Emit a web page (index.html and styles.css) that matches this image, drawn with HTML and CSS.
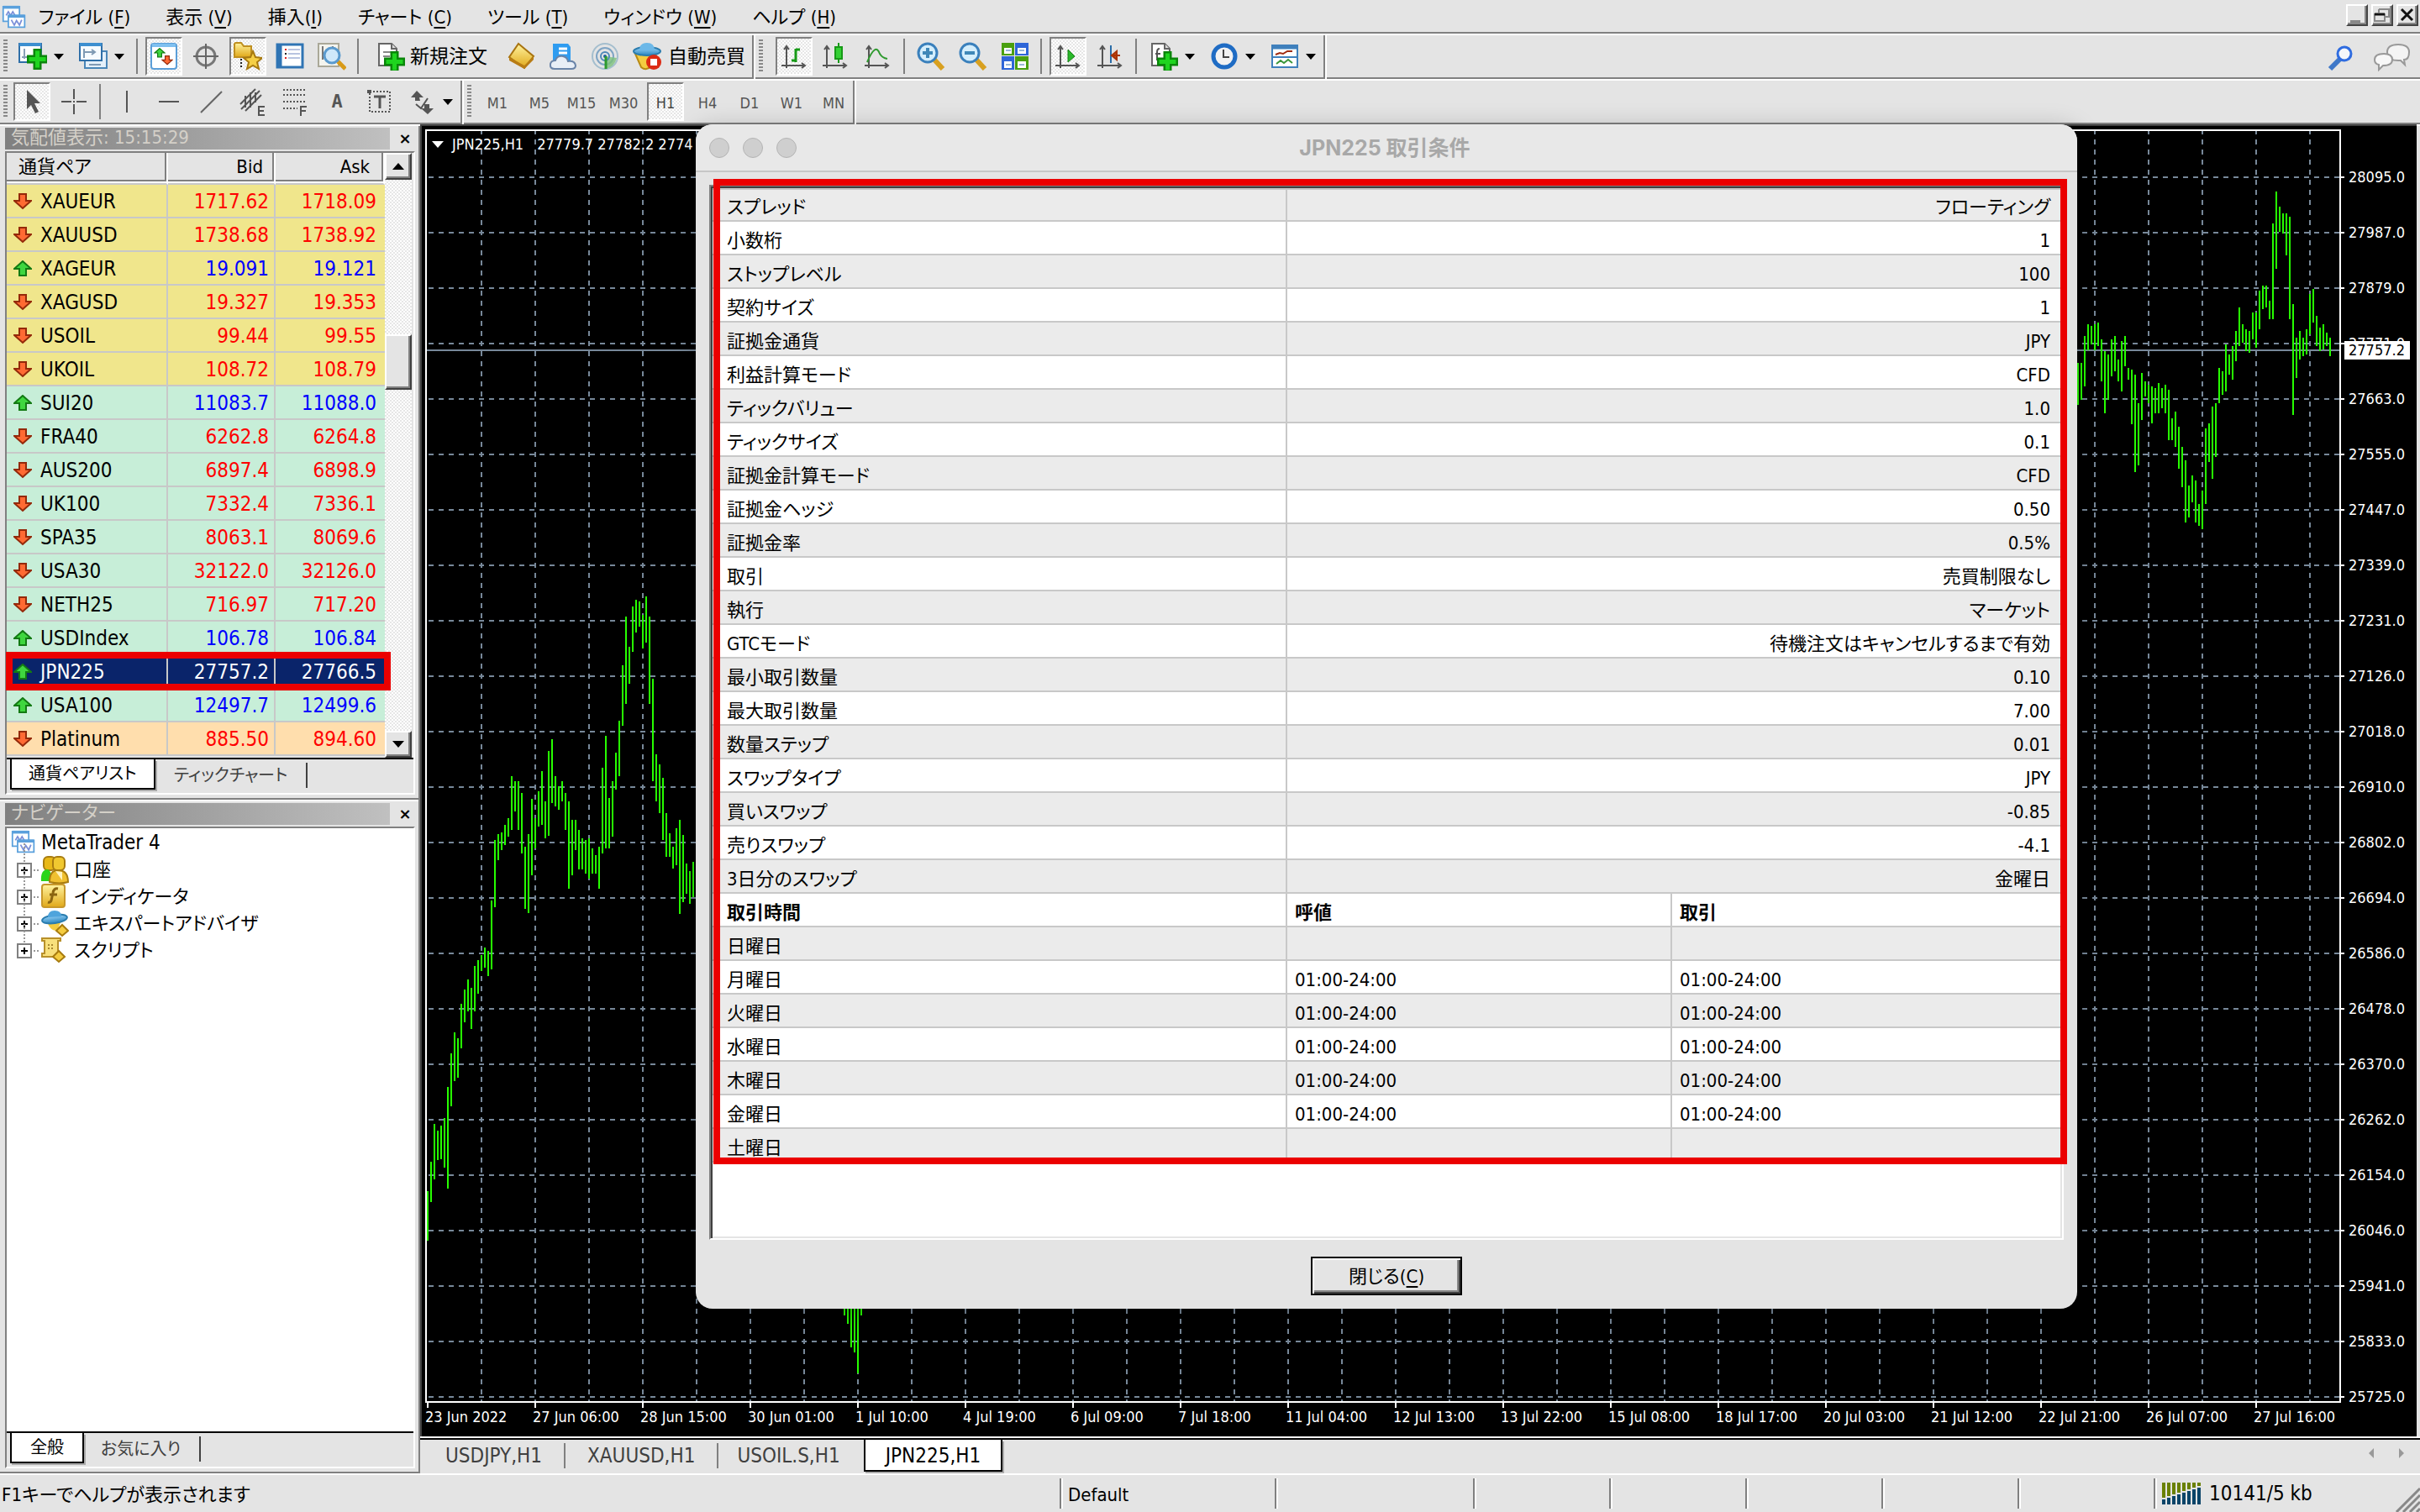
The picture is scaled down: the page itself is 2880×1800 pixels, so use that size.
FILE: index.html
```html
<!DOCTYPE html>
<html lang="ja">
<head>
<meta charset="utf-8">
<title>MetaTrader 4 - JPN225,H1</title>
<link rel="stylesheet" href="styles.css">
</head>
<body>
<svg class="defs" aria-hidden="true">
  <defs>
    <linearGradient id="gold" x1="0" y1="0" x2="0" y2="1"><stop offset="0" stop-color="#fff3a0"/><stop offset="1" stop-color="#e0a818"/></linearGradient>
    <linearGradient id="sky" x1="0" y1="0" x2="0" y2="1"><stop offset="0" stop-color="#9bd4f8"/><stop offset="1" stop-color="#2a86c0"/></linearGradient>
    <symbol id="up" viewBox="0 0 22 20"><path d="M11 1 L21 10 H15 V18 H7 V10 H1 Z" fill="#3fd63f" stroke="#137a13" stroke-width="2"/></symbol>
    <symbol id="down" viewBox="0 0 22 20"><path d="M11 18 L21 9 H15 V1 H7 V9 H1 Z" fill="#ff6a33" stroke="#94290a" stroke-width="2"/></symbol>
    <symbol id="plus" viewBox="0 0 20 20"><path d="M7 1h6v6h6v6h-6v6H7v-6H1V7h6z" fill="#1fd41f" stroke="#0a860a" stroke-width="2"/></symbol>
    <symbol id="charts" viewBox="0 0 34 34"><path d="M2 2h22v20H2z" fill="#fff" stroke="#5aa0dc" stroke-width="2"/><path d="M2 3h22" stroke="#5aa0dc" stroke-width="4"/><path d="M6 14l3-5 3 5 3-5 3 5" fill="none" stroke="#7a8fd8" stroke-width="2"/><path d="M9 14h22v16H9z" fill="#fff" stroke="#5aa0dc" stroke-width="2"/><path d="M9 15h22" stroke="#5aa0dc" stroke-width="4"/><path d="M13 20l4 7 3-6 4 6 3-7" fill="none" stroke="#7a8fd8" stroke-width="2"/></symbol>
    <symbol id="sheet" viewBox="0 0 34 34"><path d="M3 2h15l6 6v20H3z" fill="#fff" stroke="#666" stroke-width="2"/><path d="M18 2v6h6" fill="#ddd" stroke="#666" stroke-width="2"/></symbol>
  </defs>
</svg>

<header class="top">
  <nav class="menubar">
    <svg class="appicon" viewBox="0 0 34 34"><use href="#charts"/></svg>
    <button>ファイル (<u>F</u>)</button><button>表示 (<u>V</u>)</button><button>挿入(<u>I</u>)</button><button>チャート (<u>C</u>)</button><button>ツール (<u>T</u>)</button><button>ウィンドウ (<u>W</u>)</button><button>ヘルプ (<u>H</u>)</button>
    <div class="winbtns">
      <button class="winbtn" aria-label="最小化"><svg viewBox="0 0 22 22"><path d="M3 17h12v3H3z" fill="#888"/></svg></button>
      <button class="winbtn" aria-label="元に戻す"><svg viewBox="0 0 22 22"><path d="M7 4h12v9h-5M7 4v4M2 10h12v8H2z" fill="none" stroke="#888" stroke-width="2"/><path d="M2 10h12" stroke="#111" stroke-width="3"/></svg></button>
      <button class="winbtn" aria-label="閉じる"><svg viewBox="0 0 22 22"><path d="M4 4l13 13M17 4L4 17" stroke="#111" stroke-width="3"/></svg></button>
    </div>
  </nav>

  <div class="bar">
    <div class="group">
      <i class="grip"></i>
      <button class="tool drop" aria-label="新規チャート"><svg class="ic" viewBox="0 0 34 34"><path d="M1 2h26v22H1z" fill="#fff" stroke="#2f6fa8" stroke-width="2"/><path d="M1 3h26" stroke="#3c8fd0" stroke-width="4"/><path d="M7 8v12M4 18h12" stroke="#8aa0b8" stroke-width="2"/><use href="#plus" x="10" y="8" width="25" height="25"/></svg></button>
      <button class="tool drop" aria-label="プロファイル"><svg class="ic" viewBox="0 0 34 34"><path d="M7 11h26v20H7z" fill="#e4f0fa" stroke="#4a86b8" stroke-width="2"/><path d="M1 2h26v20H1z" fill="#f6fbff" stroke="#2f6fa8" stroke-width="2"/><path d="M1 3h26" stroke="#3c8fd0" stroke-width="4"/><path d="M6 8v11M5 12h14M15 9l4 3-4 3M12 27h14" fill="none" stroke="#7f9ab4" stroke-width="2"/></svg></button>
      <i class="sep"></i>
      <button class="tool on" aria-label="気配値表示"><svg class="ic" viewBox="0 0 34 34"><rect x="2" y="2" width="30" height="30" rx="3" fill="#fff" stroke="#5a9ed8" stroke-width="2"/><path d="M3 4h28" stroke="#7fc0f0" stroke-width="4"/><use href="#up" x="5" y="7" width="14" height="12"/><use href="#down" x="14" y="16" width="14" height="12"/></svg></button>
      <button class="tool" aria-label="データウィンドウ"><svg class="ic" viewBox="0 0 34 34"><circle cx="17" cy="17" r="11" fill="none" stroke="#777" stroke-width="3"/><path d="M17 2v30M2 17h30" stroke="#666" stroke-width="2"/></svg></button>
      <button class="tool on" aria-label="ナビゲーター"><svg class="ic" viewBox="0 0 34 34"><path d="M1 7V3q0-2 2-2h6l3 4h9v13H1z" fill="url(#gold)" stroke="#c09020" stroke-width="2"/><path d="M9 20v11" stroke="#222" stroke-width="2" stroke-dasharray="2 2"/><path d="M23 11l3 7 8 1-6 5 2 8-7-4-7 4 2-8-6-5 8-1z" fill="#f5cf45" stroke="#a87a10" stroke-width="2"/></svg></button>
      <button class="tool" aria-label="ターミナル"><svg class="ic" viewBox="0 0 34 34"><path d="M2 3h30v27H2z" fill="#fff" stroke="#2f74b4" stroke-width="3"/><path d="M5 4v25" stroke="#2f74b4" stroke-width="5"/><path d="M15 9h14M15 14h14M15 19h14" stroke="#b8c4e0" stroke-width="2"/><path d="M11 9h2M11 19h2" stroke="#e02020" stroke-width="2"/><path d="M11 14h2" stroke="#222" stroke-width="2"/></svg></button>
      <button class="tool" aria-label="ストラテジーテスター"><svg class="ic" viewBox="0 0 34 34"><path d="M1 2h24v27H1z" fill="#f4f4ee" stroke="#aaa898" stroke-width="2"/><path d="M6 5v16M18 5v6" stroke="#777" stroke-width="2"/><path d="M24 23l9 9" stroke="#d89a18" stroke-width="5"/><circle cx="17" cy="16" r="9" fill="#cfe8fa" stroke="#5a9ace" stroke-width="3"/></svg></button>
      <i class="sep"></i>
      <button class="tool wide"><svg class="ic" viewBox="0 0 34 34"><use href="#sheet" width="34" height="34"/><path d="M8 12h10M8 17h8" stroke="#888" stroke-width="2"/><use href="#plus" x="9" y="11" width="25" height="25"/></svg><span>新規注文</span></button>
      <button class="tool" aria-label="メタエディター"><svg class="ic" viewBox="0 0 34 34"><path d="M14 2L32 17 21 31 3 18z" fill="url(#gold)" stroke="#a87410" stroke-width="2"/><path d="M3 18l18 10 11-11v4L21 32 3 22z" fill="#b87c14"/></svg></button>
      <button class="tool" aria-label="VPS"><svg class="ic" viewBox="0 0 34 34"><path d="M5 2h18l3 4v16H5z" fill="#2f9cf0"/><path d="M12 8h10M12 13h10" stroke="#fff" stroke-width="3"/><path d="M7 32q-6 0-5-6 1-4 6-4 2-6 9-5 5 1 6 6 8-1 9 5 0 4-5 4z" fill="#e8eef6" stroke="#6a84a8" stroke-width="2"/></svg></button>
      <button class="tool" aria-label="シグナル"><svg class="ic" viewBox="0 0 34 34"><circle cx="17" cy="17" r="15" fill="none" stroke="#a4bece" stroke-width="2"/><circle cx="17" cy="17" r="10" fill="none" stroke="#7fa4c4" stroke-width="2"/><path d="M17 17l14 2q-3 11-13 13z" fill="#7cc07c" opacity=".8"/><circle cx="17" cy="17" r="5" fill="none" stroke="#4f88b8" stroke-width="2"/><circle cx="17" cy="17" r="2" fill="#2060a0"/><path d="M18 17v15" stroke="#2c9a2c" stroke-width="3"/></svg></button>
      <button class="tool auto"><svg class="ic" viewBox="0 0 34 34"><path d="M3 14l7 16q6 5 12-1l6-15z" fill="#f4cc40" stroke="#b88a14" stroke-width="2"/><ellipse cx="17" cy="11" rx="16" ry="5" fill="url(#sky)" stroke="#2a7cae" stroke-width="2"/><path d="M8 10q0-9 9-9t9 9z" fill="#6cb8e8"/><circle cx="25" cy="24" r="9" fill="#dc2a14"/><path d="M21 20h8v8h-8z" fill="#fff"/></svg><span>自動売買</span></button>
    </div>
    <div class="group charting">
      <i class="grip"></i>
      <button class="tool on" aria-label="バーチャート"><svg class="ic" viewBox="0 0 34 34"><path d="M8 5v26M2 28h28M5 9l3-4 3 4M26 25l4 3-4 3" fill="none" stroke="#555" stroke-width="2"/><path d="M19 8v16M19 9h5M14 22h5" stroke="#179a17" stroke-width="3"/></svg></button>
      <button class="tool" aria-label="ローソク足"><svg class="ic" viewBox="0 0 34 34"><path d="M6 5v26M1 28h28M3 9l3-4 3 4M25 25l4 3-4 3" fill="none" stroke="#555" stroke-width="2"/><path d="M20 1v24" stroke="#179a17" stroke-width="2"/><path d="M16 6h8v14h-8z" fill="#34d034" stroke="#179a17" stroke-width="2"/></svg></button>
      <button class="tool" aria-label="ラインチャート"><svg class="ic" viewBox="0 0 34 34"><path d="M6 5v26M1 28h28M3 9l3-4 3 4M25 25l4 3-4 3" fill="none" stroke="#555" stroke-width="2"/><path d="M4 24q10-24 15-10 3 5 9 6" fill="none" stroke="#2f9a2f" stroke-width="2"/></svg></button>
      <i class="sep"></i>
      <button class="tool" aria-label="拡大"><svg class="ic" viewBox="0 0 34 34"><path d="M20 20l11 12" stroke="#d8a020" stroke-width="6"/><circle cx="13" cy="13" r="11" fill="#d4eefc" stroke="#3a80bc" stroke-width="3"/><path d="M13 7v12M7 13h12" stroke="#3f88b8" stroke-width="4"/></svg></button>
      <button class="tool" aria-label="縮小"><svg class="ic" viewBox="0 0 34 34"><path d="M20 20l11 12" stroke="#d8a020" stroke-width="6"/><circle cx="13" cy="13" r="11" fill="#d4eefc" stroke="#3a80bc" stroke-width="3"/><path d="M7 13h12" stroke="#3f88b8" stroke-width="4"/></svg></button>
      <button class="tool" aria-label="整列"><svg class="ic" viewBox="0 0 34 34"><path d="M1 1h15v15H1zM17 17h16v16H17z" fill="#4aa010"/><path d="M17 1h16v15H17zM1 17h15v16H1z" fill="#2f66d8"/><path d="M4 7h9v7H4zM20 7h10v7H20zM4 23h9v8H4zM20 23h10v8H20z" fill="#fff"/><path d="M6 10h6M22 10h6M6 27h6M22 27h6" stroke="#9ab8d8" stroke-width="2"/></svg></button>
      <i class="sep"></i>
      <button class="tool on" aria-label="自動スクロール"><svg class="ic" viewBox="0 0 34 34"><path d="M8 5v26M2 28h28M5 9l3-4 3 4M26 25l4 3-4 3" fill="none" stroke="#555" stroke-width="2"/><path d="M17 9v15l8-7z" fill="#2ab82a" stroke="#158015" stroke-width="1"/></svg></button>
      <button class="tool" aria-label="シフト"><svg class="ic" viewBox="0 0 34 34"><path d="M8 5v26M2 28h28M5 9l3-4 3 4M26 25l4 3-4 3" fill="none" stroke="#555" stroke-width="2"/><path d="M18 4v21" stroke="#2a6ca8" stroke-width="2"/><path d="M29 16h-8M25 11l-6 5 6 5z" fill="#c84a14" stroke="#a83408" stroke-width="2"/></svg></button>
      <i class="sep"></i>
      <button class="tool drop" aria-label="インディケータ"><svg class="ic" viewBox="0 0 34 34"><use href="#sheet" width="34" height="34"/><path d="M12 8q-3 0-3 4v10M7 14h6" fill="none" stroke="#555" stroke-width="2"/><use href="#plus" x="9" y="11" width="25" height="25"/></svg></button>
      <button class="tool drop" aria-label="時間足"><svg class="ic" viewBox="0 0 34 34"><circle cx="17" cy="17" r="13" fill="#f2f2f2" stroke="#1f6cc4" stroke-width="5"/><path d="M16 9v9h7" fill="none" stroke="#444" stroke-width="2"/></svg></button>
      <button class="tool drop" aria-label="テンプレート"><svg class="ic" viewBox="0 0 34 34"><path d="M2 4h30v26H2z" fill="#fff" stroke="#3f80bc" stroke-width="2"/><path d="M2 6h30" stroke="#3f80bc" stroke-width="5"/><path d="M2 18h30" stroke="#3f80bc" stroke-width="2"/><path d="M6 15l5-2 4 1 5-3h6" fill="none" stroke="#a02c10" stroke-width="2"/><path d="M7 26l5-4 4 3 5-4 5 4" fill="none" stroke="#3a963a" stroke-width="2"/></svg></button>
    </div>
    <div class="bar-end">
      <button class="tool" aria-label="検索"><svg class="ic" viewBox="0 0 34 34"><path d="M5 31l12-12" stroke="#3f78c8" stroke-width="6"/><circle cx="22" cy="13" r="8" fill="#f4f6fa" stroke="#2f6ce0" stroke-width="3"/></svg></button>
      <button class="tool chat" aria-label="チャット"><svg class="icw" viewBox="0 0 44 34"><path d="M29 2q13 0 13 9t-6 9l1 6-5-5q-16 1-16-10 0-9 13-9z" fill="#f4f4f4" stroke="#999" stroke-width="2"/><path d="M12 13q10 0 10 7t-11 7l-5 5v-6q-5-1-5-6 0-7 11-7z" fill="#f8f8f8" stroke="#999" stroke-width="2"/></svg></button>
    </div>
  </div>

  <div class="bar">
    <div class="group">
      <i class="grip"></i>
      <button class="tool on" aria-label="カーソル"><svg class="ic" viewBox="0 0 34 34"><path d="M11 3v23l5-5 5 10 4-2-5-10h7z" fill="#555"/></svg></button>
      <button class="tool" aria-label="クロスヘア"><svg class="ic" viewBox="0 0 34 34"><path d="M17 2v12M17 20v12M2 17h12M20 17h12M16 17h2" stroke="#555" stroke-width="2"/></svg></button>
      <i class="sep"></i>
      <button class="tool" aria-label="垂直線"><svg class="ic" viewBox="0 0 34 34"><path d="M17 4v26" stroke="#555" stroke-width="2"/></svg></button>
      <button class="tool" aria-label="水平線"><svg class="ic" viewBox="0 0 34 34"><path d="M5 17h24" stroke="#555" stroke-width="2"/></svg></button>
      <button class="tool" aria-label="トレンドライン"><svg class="ic" viewBox="0 0 34 34"><path d="M5 30L30 5" stroke="#666" stroke-width="2"/></svg></button>
      <button class="tool" aria-label="平行チャネル"><svg class="ic" viewBox="0 0 34 34"><path d="M2 20L20 2M3 26L25 4M8 28L27 9M8 10v14M14 6v18M20 6v12" stroke="#555" stroke-width="2"/><path d="M31 23h-7v10h7M24 28h6" fill="none" stroke="#555" stroke-width="2"/></svg></button>
      <button class="tool" aria-label="フィボナッチ"><svg class="ic" viewBox="0 0 34 34"><path d="M3 3h28M3 9h28M3 17h28M3 25h17" stroke="#555" stroke-width="2" stroke-dasharray="2 2"/><path d="M31 23h-7v11M24 28h6" fill="none" stroke="#555" stroke-width="2"/></svg></button>
      <button class="tool letter">A</button>
      <button class="tool" aria-label="テキストラベル"><svg class="ic" viewBox="0 0 34 34"><path d="M6 5h24v24H6z" fill="none" stroke="#555" stroke-width="2" stroke-dasharray="2 2"/><path d="M3 3h5v4H3z" fill="#555"/><path d="M11 11h14M18 11v14" stroke="#555" stroke-width="3"/></svg></button>
      <button class="tool drop" aria-label="矢印"><svg class="ic" viewBox="0 0 34 34"><path d="M11 4l8 8h-5l1 4h-6V12H4zM24 32l-8-7h4v-5h6v5h5z" fill="#555"/><path d="M10 20l6 5 8-12" fill="none" stroke="#555" stroke-width="2"/></svg></button>
    </div>
    <div class="group frames">
      <i class="grip"></i>
      <button class="tool tf">M1</button><button class="tool tf">M5</button><button class="tool tf">M15</button><button class="tool tf">M30</button><button class="tool tf on">H1</button><button class="tool tf">H4</button><button class="tool tf">D1</button><button class="tool tf">W1</button><button class="tool tf">MN</button>
    </div>
  </div>
</header>

<main class="work">
  <aside class="dock">
    <section class="panel watch">
      <div class="caption"><h2>気配値表示: 15:15:29</h2><button class="x" aria-label="閉じる">×</button></div>
      <div class="box">
        <div class="list">
          <table class="quotes">
            <thead><tr><th class="sym">通貨ペア</th><th>Bid</th><th class="ask">Ask</th></tr></thead>
            <tbody id="quotes"></tbody>
          </table>
          <div class="scroll">
            <button class="sbtn" aria-label="上へ"><i class="tri up"></i></button>
            <i class="thumb"></i>
            <button class="sbtn last" aria-label="下へ"><i class="tri"></i></button>
          </div>
          <span class="mark mark-row"></span>
        </div>
        <div class="tabs"><button class="tab active">通貨ペアリスト</button><button class="tab">ティックチャート</button></div>
      </div>
    </section>
    <section class="panel nav">
      <div class="caption"><h2>ナビゲーター</h2><button class="x" aria-label="閉じる">×</button></div>
      <div class="box">
        <div class="tree">
          <div class="root"><svg viewBox="0 0 34 34"><use href="#charts"/></svg>MetaTrader 4</div>
          <ul>
            <li><i class="exp"></i><svg viewBox="0 0 34 34"><rect x="4" y="1" width="14" height="16" rx="5" fill="#e8b818" stroke="#a87c10" stroke-width="2"/><rect x="15" y="1" width="14" height="16" rx="5" fill="#f0c830" stroke="#a87c10" stroke-width="2"/><path d="M1 30q-1-14 8-14 5 2 4 14z" fill="#2ad41a"/><path d="M11 31q0-14 10-14 12 0 12 14-10 3-22 0z" fill="#f0c030" stroke="#a87c10" stroke-width="2"/><path d="M18 18l8 11V19z" fill="#fff3c0"/></svg>口座</li>
            <li><i class="exp"></i><svg viewBox="0 0 34 34"><rect x="2" y="2" width="27" height="27" rx="3" fill="url(#gold)" stroke="#c8982a" stroke-width="2"/><path d="M21 7q-5-1-6 5l-2 9q-1 3-4 2M11 14h9" fill="none" stroke="#8a6410" stroke-width="3"/></svg>インディケータ</li>
            <li><i class="exp"></i><svg viewBox="0 0 34 34"><path d="M8 12q2 13 12 13l5-12z" fill="#f4cc40"/><ellipse cx="17" cy="11" rx="15" ry="5" fill="url(#sky)" stroke="#2a7cae" stroke-width="2" transform="rotate(-8 17 11)"/><path d="M9 9q0-8 8-8t8 7z" fill="#4fa4dc"/><path d="M26 18l7 7-7 6-7-6z" fill="#f4cc40" stroke="#a87c10" stroke-width="2"/></svg>エキスパートアドバイザ</li>
            <li><i class="exp"></i><svg viewBox="0 0 34 34"><path d="M2 2h22v3h-3v15h3v4H2v-4h3V5H2z" fill="#f8e07c" stroke="#b8902a" stroke-width="2"/><path d="M9 10h8M9 14h8" stroke="#a88830" stroke-width="2" stroke-dasharray="2 2"/><path d="M22 17l7 7-7 6-7-6z" fill="#f4cc40" stroke="#a87c10" stroke-width="2"/></svg>スクリプト</li>
          </ul>
        </div>
        <div class="tabs"><button class="tab active">全般</button><button class="tab">お気に入り</button></div>
      </div>
    </section>
  </aside>

  <section class="mdi">
    <div class="chart">
      <div class="plot" id="plot"><p class="ohlc"><i class="tri white"></i><span>JPN225,H1</span> <span>27779.7 27782.2 2774</span></p></div>
      <div class="prices" id="prices"><b class="now">27757.2</b></div>
      <div class="times" id="times"></div>
    </div>
    <div class="tabs mditabs"><button class="tab">USDJPY,H1</button><button class="tab">XAUUSD,H1</button><button class="tab">USOIL.S,H1</button><button class="tab active">JPN225,H1</button>
      <span class="arrows"><i class="tl"></i><i class="tr"></i></span></div>
  </section>
</main>

<footer class="status">
  <span class="help">F1キーでヘルプが表示されます</span><span class="s1">Default</span><span></span><span></span><span></span><span></span><span></span><span></span>
  <span class="net"><svg viewBox="0 0 48 26"><path d="M0 0h4v18H0zM6 0h4v16H6zM12 0h4v14h-4zM18 0h4v12h-4zM24 0h4v10h-4zM30 0h4v8h-4zM36 0h4v6h-4zM42 0h4v4h-4z" fill="#6a8000"/><path d="M0 20h4v6H0zM6 18h4v8H6zM12 16h4v10h-4zM18 14h4v12h-4zM24 12h4v14h-4zM30 10h4v16h-4zM36 8h4v18h-4zM42 6h4v20h-4z" fill="#0a4468"/></svg>10141/5 kb
    <svg class="sizer" viewBox="0 0 30 30"><path d="M2 30L30 2M10 30L30 10M18 30L30 18M26 30l4-4" stroke="#888" stroke-width="3"/></svg></span>
</footer>

<div class="dialog" role="dialog" aria-labelledby="dt">
  <div class="titlebar"><i class="light"></i><i class="light"></i><i class="light"></i><h1 id="dt">JPN225 取引条件</h1></div>
  <div class="dbody">
    <div class="frame">
      <table class="spec">
        <colgroup><col class="c1"><col class="c2"><col></colgroup>
        <tbody id="spec"></tbody>
        <tbody id="hours"><tr class="head"><th>取引時間</th><th>呼値</th><th>取引</th></tr></tbody>
      </table>
    </div>
    <button class="ok">閉じる(<u>C</u>)</button>
  </div>
  <span class="mark mark-table"></span>
</div>

<script src="app.js"></script>
</body>
</html>
```
FILE: styles.css
```css
* { box-sizing: border-box; }
html, body { margin: 0; height: 100%; }
body {
  display: flex; flex-direction: column; overflow: hidden; position: relative;
  background: #e4e4e4; color: #000;
  font: 24px/32px "DejaVu Sans Condensed", "Noto Sans CJK JP", sans-serif;
  font-feature-settings: "palt";
}
button { font: inherit; font-feature-settings: inherit; color: inherit; background: none; border: 0; padding: 0; margin: 0; }
h1, h2, p, ul { margin: 0; padding: 0; font: inherit; list-style: none; }
i { display: block; font-style: normal; }
svg { display: block; flex: none; }
.defs { position: absolute; width: 0; height: 0; }
u { text-underline-offset: 4px; }

/* menu and toolbars */
.menubar { display: flex; align-items: center; gap: 42px; height: 42px; padding: 2px 0 0 2px; border-bottom: 2px solid #fff; box-shadow: inset 0 -2px #808080; font-size: 22px; }
.appicon { width: 30px; height: 30px; margin-right: -28px; }
.winbtns { display: flex; gap: 4px; margin: 0 2px 6px auto; }
.winbtn { width: 26px; height: 26px; border: 2px solid; border-color: #fff #444 #444 #fff; box-shadow: inset -2px -2px #888; padding: 0; }
.bar { display: flex; height: 54px; border-bottom: 2px solid #fff; box-shadow: inset 0 -2px #808080; }
.group { display: flex; align-items: center; padding: 0 2px 2px 4px; border-right: 2px solid #fff; box-shadow: inset -2px 0 #808080; }
.grip { width: 5px; height: 40px; margin-right: 4px; background: repeating-linear-gradient(#888 0 2px, #e4e4e4 2px 4px); }
.charting .grip { margin-right: 12px; }
.frames .grip { margin-right: 6px; }
.frames { padding-right: 0; }
.tool { display: flex; align-items: center; justify-content: center; width: 44px; height: 46px; margin: 0 3px; flex: none; }
.tool.on { border: 2px solid; border-color: #808080 #fff #fff #808080; background: repeating-conic-gradient(#fff 0 25%, #e6e6e6 0 50%) 0 0 / 4px 4px; }
.ic { width: 34px; height: 34px; }
.icw { width: 44px; height: 34px; }
.drop { width: 66px; gap: 8px; }
.drop::after { content: ""; border: 6px solid transparent; border-top: 7px solid #000; border-bottom: 0; }
.sep { width: 2px; height: 42px; background: #808080; margin: 0 6px 0 5px; }
.wide { width: 156px; gap: 6px; }
.auto { width: 144px; gap: 8px; }
.wide span, .auto span { font-size: 23px; }
.bar-end { display: flex; align-items: center; margin-left: auto; padding-right: 8px; gap: 12px; }
.letter { font: bold 22px/24px "DejaVu Sans Mono", monospace; color: #555; }
.tf { font-size: 18px; color: #555; padding-top: 3px; }
.tf.on { color: #444; }

/* main area */
.work { flex: 1; display: flex; min-height: 0; }
.dock { width: 498px; flex: none; display: flex; flex-direction: column; }
.panel { display: flex; flex-direction: column; padding: 2px 4px 4px 6px; border-bottom: 2px solid #808080; }
.watch { height: 802px; }
.nav { flex: 1; border-top: 2px solid #fff; }
.caption { display: flex; justify-content: space-between; align-items: center; height: 26px; margin-bottom: 2px; }
.caption h2 { width: 458px; height: 26px; padding-left: 7px; font-size: 22px; line-height: 24px; color: #d4d0c8; background: linear-gradient(90deg, #808080, #c0c0c0); overflow: hidden; }
.x { width: 24px; font: bold 18px/22px "DejaVu Sans", sans-serif; }
.box { flex: 1; display: flex; flex-direction: column; min-height: 0; border: 2px solid; border-color: #808080 #fff #fff #808080; }
.list { position: relative; display: flex; align-items: flex-start; height: 722px; border-bottom: 2px solid #000; padding-right: 2px; }
.quotes { flex: 1; border-spacing: 0; table-layout: fixed; }
.quotes th, .quotes td { font-weight: normal; padding: 2px 6px 0 0; height: 40px; text-align: right; border-bottom: 2px solid #c8c8c8; border-right: 2px solid #c8c8c8; line-height: 30px; }
.quotes th { height: 38px; padding: 0 13px 2px 0; border-right-color: #fff; font-size: 22px; line-height: 24px; box-shadow: inset 0 -2px #fff, inset -2px -4px #808080; }
.quotes .sym { width: 192px; text-align: left; padding-left: 14px; }
.quotes th:nth-child(2) { width: 128px; }
.quotes td:last-child { border-right: 0; padding-right: 10px; }
.quotes .ask { padding-right: 16px; }
.cell { display: flex; align-items: center; padding-left: 8px; gap: 10px; }
.cell svg { width: 22px; height: 20px; }
.gold { background: #f0e68c; }
.mint { background: #c7eed8; }
.peach { background: #ffdead; }
.sel { background: #0a246a; color: #fff; }
.dn { color: #f00; }
.rise { color: #00f; }
.sel .rise { color: #fff; }
.scroll { width: 32px; align-self: stretch; flex: none; display: flex; flex-direction: column; background: repeating-conic-gradient(#fff 0 25%, #e6e6e6 0 50%) 0 0 / 4px 4px; }
.sbtn, .thumb { background: #e4e4e4; border: 2px solid; border-color: #fff #404040 #404040 #fff; box-shadow: inset -2px -2px #808080; }
.sbtn { height: 32px; display: flex; align-items: center; justify-content: center; }
.thumb { height: 66px; margin-top: 184px; }
.last { margin-top: auto; }
.tri { width: 0; height: 0; border: 7px solid transparent; border-top: 8px solid #000; border-bottom: 0; }
.tri.up { border-top: 0; border-bottom: 8px solid #000; }
.mark { position: absolute; border: 8px solid #eb0000; pointer-events: none; }
.mark-row { left: -1px; top: 594px; width: 458px; height: 46px; }

.tabs { display: flex; align-items: flex-start; height: 40px; padding-left: 4px; font-size: 20px; }
.tab { height: 36px; padding: 0 22px; color: #404040; line-height: 34px; }
.tab.active { color: #000; background: #fff; border: 2px solid #000; border-top: 0; box-shadow: 2px 2px #aaa; padding: 0 20px; }
.active + .tab { border-right: 2px solid #404040; height: 30px; margin-top: 4px; line-height: 28px; }
.nav .active { padding: 0 22px; }
.nav .active + .tab { padding: 0 22px 0 20px; }
.tree { flex: 1; background: #fff; border-bottom: 2px solid #000; }
.root { display: flex; align-items: center; height: 34px; padding-left: 5px; gap: 6px; }
.root svg { width: 30px; height: 30px; }
.tree li { position: relative; display: flex; align-items: center; height: 32px; padding-left: 12px; font-size: 22px; }
.tree li::before { content: ""; width: 2px; height: 32px; position: absolute; left: 20px; top: -16px; background: repeating-linear-gradient(#999 0 2px, transparent 2px 4px); }
.tree li svg { width: 34px; height: 34px; margin-right: 6px; }
.exp { position: relative; width: 18px; height: 18px; border: 2px solid #808080; margin-right: 10px; background: linear-gradient(#000, #000) center / 8px 2px no-repeat, linear-gradient(#000, #000) center / 2px 8px no-repeat, #fff; }
.exp::after { content: ""; position: absolute; left: 18px; top: 6px; width: 8px; height: 2px; background: repeating-linear-gradient(90deg, #999 0 2px, transparent 2px 4px); }

/* chart */
.mdi { flex: 1; display: flex; flex-direction: column; min-width: 0; border-left: 2px solid #808080; }
.chart { flex: 1; min-height: 0; display: grid; grid-template-columns: 1fr 90px; grid-template-rows: 1fr 40px; background: #000; color: #fff; font-size: 18px; line-height: 22px; padding: 4px 0 0 4px; margin-right: 4px; border: 2px solid #404040; border-width: 2px 0 0 2px; margin-top: -2px; }
.plot { position: relative; border: 2px solid #fff; overflow: hidden; }
.plot svg { position: absolute; inset: 0; width: 100%; height: 100%; }
.ohlc { position: relative; z-index: 1; display: flex; gap: 16px; padding: 5px 0 0 6px; align-items: center; white-space: nowrap; }
.ohlc .tri { border-top-color: #fff; margin-right: -6px; }
.prices { position: relative; grid-row: 1 / 3; grid-column: 2; padding-top: 24px; overflow: hidden; }
.prices span { position: relative; display: flex; align-items: center; height: 66px; padding-left: 9px; }
.prices span::before { content: ""; position: absolute; left: 0; top: 32px; width: 4px; height: 2px; background: #fff; }
.now { position: absolute; z-index: 1; left: 4px; top: 252px; width: 78px; height: 22px; padding-left: 5px; background: #fff; color: #000; font-weight: normal; }
.times { display: flex; overflow: hidden; }
.times span { position: relative; width: 128px; flex: none; padding-top: 6px; white-space: nowrap; }
.times span::before { content: ""; position: absolute; left: 2px; top: 0; width: 2px; height: 6px; background: #fff; }
.mditabs { height: 42px; margin-top: 2px; border-top: 2px solid #000; box-shadow: 0 -2px #fff; padding-left: 4px; font-size: 24px; }
.mditabs .tab { height: 38px; line-height: 38px; padding: 0 26px; }
.mditabs .tab:not(.active) { border-right: 2px solid #808080; height: 30px; margin-top: 4px; line-height: 30px; }
.mditabs .tab:nth-child(3) { border-right: 0; padding: 0 28px 0 22px; }
.mditabs .tab.active { padding: 0 24px; }
.arrows { display: flex; gap: 30px; margin: 10px 19px 0 auto; }
.tl, .tr { border: 6px solid transparent; }
.tl { border-left: 0; border-right-color: #999; }
.tr { border-right: 0; border-left-color: #999; }

.status { display: flex; align-items: center; height: 46px; border-top: 2px solid #fff; font-size: 22px; line-height: 40px; flex: none; }
.status span { width: 162px; height: 36px; border-left: 2px solid #808080; box-shadow: inset 2px 0 #fff; padding-left: 8px; }
.status .help { flex: 1; border: 0; box-shadow: none; padding-left: 2px; }
.status .s1 { width: 256px; }
.status .s1 + span { width: 236px; }
.status .net { width: 317px; display: flex; align-items: center; gap: 8px; font-size: 24px; }
.net svg { width: 48px; height: 26px; }
.status .sizer { width: 30px; height: 30px; margin-left: auto; align-self: flex-end; margin-bottom: -4px; }

/* contract specification window */
.dialog { position: absolute; z-index: 2; left: 828px; top: 148px; width: 1644px; background: #e4e4e4; border-radius: 20px; box-shadow: 0 6px 30px rgba(0,0,0,.25); font-size: 22px; }
.titlebar { display: flex; align-items: center; gap: 16px; height: 57px; padding-left: 16px; background: #e8e8e8; border-bottom: 2px solid #c6c6c6; border-radius: 20px 20px 0 0; }
.light { width: 24px; height: 24px; border-radius: 50%; background: #cfcfcf; border: 1px solid #b4b4b4; }
.titlebar h1 { flex: 1; margin-right: 140px; text-align: center; font: bold 25px/32px Inter, "Noto Sans CJK JP", sans-serif; color: #a8a8a8; }
.dbody { display: flex; flex-direction: column; align-items: center; padding: 15px 16px 16px; }
.frame { width: 100%; height: 1256px; background: #fff; border: 2px solid; border-color: #808080 #fff #fff #808080; box-shadow: inset 2px 2px #404040, inset -2px -2px #e4e4e4; padding: 2px; }
.spec { width: 100%; border-spacing: 0; table-layout: fixed; }
.c1 { width: 684px; }
.c2 { width: 458px; }
.spec th, .spec td { height: 40px; padding: 7px 0 0 9px; border-bottom: 2px solid #c8c8c8; border-right: 2px solid #c8c8c8; text-align: left; line-height: 28px; background: #fff; }
.spec th:first-child, .spec td:first-child { padding-left: 17px; }
.spec td:last-child, .spec th:last-child { border-right: 0; }
.spec td.val { text-align: right; padding-right: 12px; }
.spec .alt td { background: #ebebeb; }
.spec tbody:first-of-type tr:first-child td { box-shadow: inset 0 2px #c8c8c8; }
.ok { width: 180px; height: 46px; margin-top: 20px; padding-top: 2px; border: 2px solid #000; box-shadow: inset 2px 2px #fff, inset -2px -2px #404040, inset -4px -4px #888; }
.mark-table { left: 21px; top: 65px; width: 1611px; height: 1173px; }
```
FILE: app.js
```js
const quotes = [
  ['XAUEUR','1717.62','1718.09',0,'gold'],['XAUUSD','1738.68','1738.92',0,'gold'],['XAGEUR','19.091','19.121',1,'gold'],
  ['XAGUSD','19.327','19.353',0,'gold'],['USOIL','99.44','99.55',0,'gold'],['UKOIL','108.72','108.79',0,'gold'],
  ['SUI20','11083.7','11088.0',1,'mint'],['FRA40','6262.8','6264.8',0,'mint'],['AUS200','6897.4','6898.9',0,'mint'],
  ['UK100','7332.4','7336.1',0,'mint'],['SPA35','8063.1','8069.6',0,'mint'],['USA30','32122.0','32126.0',0,'mint'],
  ['NETH25','716.97','717.20',0,'mint'],['USDIndex','106.78','106.84',1,'mint'],['JPN225','27757.2','27766.5',1,'sel'],
  ['USA100','12497.7','12499.6',1,'mint'],['Platinum','885.50','894.60',0,'peach']
];
document.getElementById('quotes').innerHTML = quotes.map(([s, b, a, up, c]) => {
  const k = up ? 'rise' : 'dn';
  return `<tr class="${c}"><td><div class="cell"><svg><use href="#${up ? 'up' : 'down'}"/></svg>${s}</div></td><td class="${k}">${b}</td><td class="${k}">${a}</td></tr>`;
}).join('');

const spec = [
  ['スプレッド','フローティング'],['小数桁','1'],['ストップレベル','100'],['契約サイズ','1'],['証拠金通貨','JPY'],
  ['利益計算モード','CFD'],['ティックバリュー','1.0'],['ティックサイズ','0.1'],['証拠金計算モード','CFD'],['証拠金ヘッジ','0.50'],
  ['証拠金率','0.5%'],['取引','売買制限なし'],['執行','マーケット'],['GTCモード','待機注文はキャンセルするまで有効'],
  ['最小取引数量','0.10'],['最大取引数量','7.00'],['数量ステップ','0.01'],['スワップタイプ','JPY'],['買いスワップ','-0.85'],
  ['売りスワップ','-4.1'],['3日分のスワップ','金曜日']
];
document.getElementById('spec').innerHTML = spec.map(([n, v], i) =>
  `<tr class="${i % 2 ? '' : 'alt'}"><td>${n}</td><td class="val" colspan="2">${v}</td></tr>`).join('');

const open = '01:00-24:00';
document.getElementById('hours').insertAdjacentHTML('beforeend', '日月火水木金土'.split('').map((d, i) => {
  const h = i > 0 && i < 6 ? open : '';
  return `<tr class="${i % 2 ? '' : 'alt'}"><td>${d}曜日</td><td>${h}</td><td>${h}</td></tr>`;
}).join(''));

/* The current price tag lies over the lower part of the 27771.0 label */
const levels = [28095,27987,27879,27771,27663,27555,27447,27339,27231,27126,27018,26910,26802,26694,26586,26478,26370,26262,26154,26046,25941,25833,25725];
document.getElementById('prices').insertAdjacentHTML('beforeend', levels.map(p => `<span>${p}.0</span>`).join(''));
const times = ['23 Jun 2022','27 Jun 06:00','28 Jun 15:00','30 Jun 01:00','1 Jul 10:00','4 Jul 19:00','6 Jul 09:00','7 Jul 18:00','11 Jul 04:00','12 Jul 13:00','13 Jul 22:00','15 Jul 08:00','18 Jul 17:00','20 Jul 03:00','21 Jul 12:00','22 Jul 21:00','26 Jul 07:00','27 Jul 16:00'];
document.getElementById('times').innerHTML = times.map(t => `<span>${t}</span>`).join('');

/* High/low pairs, one bar every 4px: first = bar index, y = base + value * scale */
const series = [
  { first: 0, base: 504, scale: 0.6761, bars: '1121-1209 1070-1141 1003-1101 1015-1067 1006-1065 993-1079 938-1117 879-972 841-928 852-922 791-869 766-824 748-804 763-836 725-804 715-774 705-733 692-728 698-742 609-731 503-621 493-538 490-521 476-512 464-497 391-485 399-453 399-485 420-526 515-624 493-632 431-565 464-517 417-479 382-476 435-500 346-496 325-438 391-444 408-450 399-435 420-485 435-588 467-565 467-521 485-555 500-555 503-562 500-571 517-562 530-562 515-588 376-526 320-517 429-517 399-497 349-414 293-391 195-302 109-263 163-228 92-172 80-138 83-127 107-165 74-156 109-263 219-399 352-435 370-456 393-503 456-532 491-532 515-553 482-547 467-633 494-612 544-598 558-615 541-604' },
  { first: 124, base: 504, scale: 0.6761, bars: '1310-1340 1310-1355 1310-1396 1310-1405 1310-1442 1310-1340' },
  { first: 491, base: -16, scale: 0.3827, bars: '763-893 763-878 679-835 643-725 648-705 643-725 638-710 690-820 727-920 738-878 690-804 679-789 753-820 695-851 679-774 779-814 784-955 800-1103 889-1082 794-940 820-867 831-888 836-950 841-919 826-919 841-904 831-919 847-1003 936-1003 915-1024 962-1091 1024-1149 1066-1259 1145-1243 1113-1196 1129-1259 1202-1270 1160-1280 967-1201 951-1071 899-1123 889-1055 779-888 789-861 706-851 738-799 711-814 664-757 591-710 643-699 659-726 664-731 606-689 606-715 538-658 523-596 523-590 570-627 329-627 230-470 277-355 298-361 298-429 308-627 580-925 685-809 664-753 685-741 659-737 548-674 533-637 617-710 653-726 643-720 669-710 685-741' }
];
const plot = document.getElementById('plot');
const w = plot.clientWidth, h = plot.clientHeight;
let grid = '', bars = '';
for (let x = 65; x < w; x += 64) grid += `M${x} -2V${h}`;
for (let y = 55; y < h; y += 66) grid += `M2 ${y}H${w}`;
for (const s of series) {
  s.bars.split(' ').forEach((b, i) => {
    const [t, e] = b.split('-').map(v => Math.round(s.base + v * s.scale));
    bars += `M${(s.first + i) * 4 + 1} ${t}V${e}`;
  });
}
plot.insertAdjacentHTML('afterbegin', `<svg><path d="${grid}" stroke="#778899" stroke-width="2" stroke-dasharray="6 6"/><path d="M0 261H${w}" stroke="#778899" stroke-width="2"/><path d="${bars}" stroke="#26ff00" stroke-width="2"/></svg>`);
```
